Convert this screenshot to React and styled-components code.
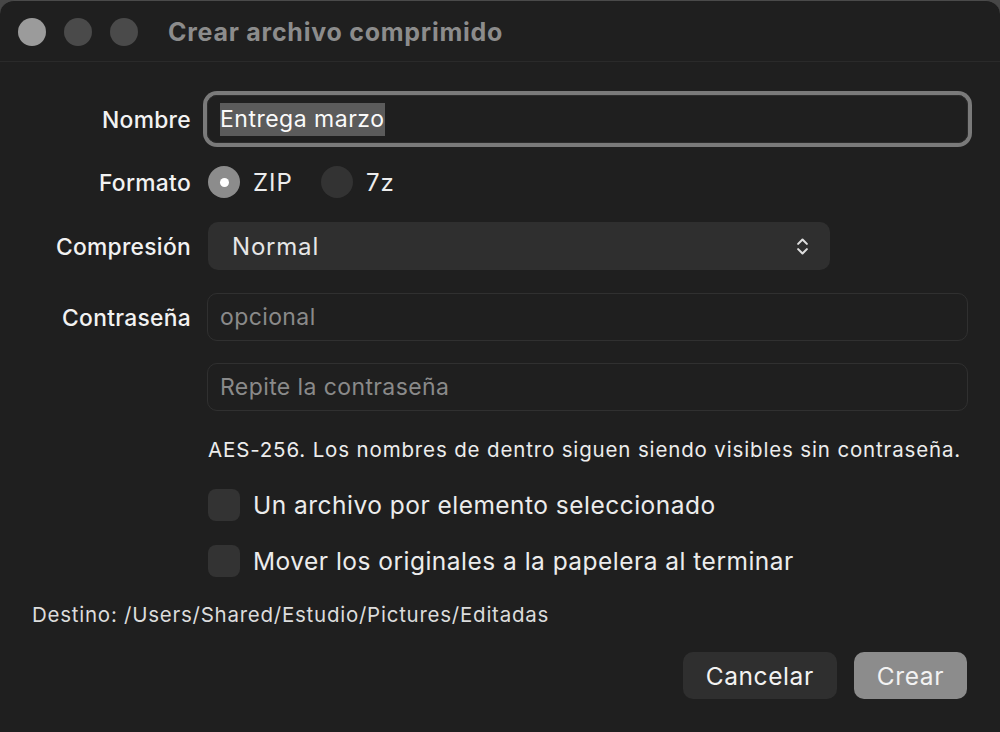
import React from "react";
import styled, { createGlobalStyle } from "styled-components";
import { ChevronsUpDown } from "lucide-react";

const GlobalStyle = createGlobalStyle`
    html, body {
        margin: 0;
        padding: 0;
        background: #474747;
    }
    body {
        font-family: "Inter", "Liberation Sans", sans-serif;
        -webkit-font-smoothing: antialiased;
    }
`;

const Window = styled.div`
    width: 1000px;
    height: 732px;
    box-sizing: border-box;
    background: #1f1f1f;
    border-top: 1px solid #4a4a4a;
    border-radius: 14px 14px 0 0;
    display: flex;
    flex-direction: column;
    overflow: hidden;
`;

const TitleBar = styled.div`
    height: 61px;
    display: flex;
    align-items: center;
    padding: 2px 0 0 18px;
    box-sizing: border-box;
    border-bottom: 1px solid #2a2a2a;
`;

const Light = styled.span`
    width: 28px;
    height: 28px;
    border-radius: 50%;
    background: ${(p) => (p.active ? "#9b9b9b" : "#4a4a4a")};
    margin-right: 18px;
`;

const Title = styled.h1`
    margin: 0 0 0 12px;
    font-size: 25px;
    font-weight: 700;
    color: #8c8c8c;
    letter-spacing: 0.75px;
`;

const Body = styled.div`
    display: flex;
    flex-direction: column;
    padding: 0 32px 0 0;
`;

const Row = styled.div`
    display: flex;
    align-items: center;
    margin-top: ${(p) => p.mt}px;
    height: ${(p) => p.h}px;
`;

const Label = styled.div`
    width: 191px;
    flex-shrink: 0;
    text-align: right;
    font-size: 22.8px;
    font-weight: 500;
    letter-spacing: 0.3px;
    color: #f2f2f2;
    margin-right: 16px;
`;

const Field = styled.div`
    flex: 1;
    height: 48px;
    box-sizing: border-box;
    display: flex;
    align-items: center;
    padding: 0 12px;
    border-radius: 10px;
    border: 1px solid ${(p) => (p.focused ? "#2c2c2c" : "#303030")};
    font-size: 23px;
    letter-spacing: ${(p) => (p.focused ? 0.5 : 0.4)}px;
    color: ${(p) => (p.placeholder ? "#8a8a8a" : "#f2f2f2")};
    box-shadow: ${(p) => (p.focused ? "0 0 0 4px #7a7a7a" : "none")};
`;

const Selection = styled.span`
    background: #5b5b5b;
    padding: 2px 0 3px;
    color: #fafafa;
`;

const RadioGroup = styled.div`
    display: flex;
    align-items: center;
    padding-left: 1px;
`;

const Radio = styled.span`
    width: 32px;
    height: 32px;
    border-radius: 50%;
    background: ${(p) => (p.checked ? "#8c8c8c" : "#333333")};
    display: flex;
    align-items: center;
    justify-content: center;
    margin-right: 13px;

    &::after {
        content: "";
        width: 9px;
        height: 9px;
        border-radius: 50%;
        background: #ffffff;
        display: ${(p) => (p.checked ? "block" : "none")};
    }
`;

const OptionText = styled.span`
    font-size: 24px;
    letter-spacing: 1px;
    color: #ececec;
    margin-right: ${(p) => p.mr || 0}px;
`;

const Select = styled.div`
    width: 622px;
    height: 48px;
    box-sizing: border-box;
    margin-left: 1px;
    background: #2f2f2f;
    border-radius: 10px;
    display: flex;
    align-items: center;
    justify-content: space-between;
    padding: 0 17px 0 24px;
    font-size: 24px;
    letter-spacing: 0.8px;
    color: #e6e6e6;
`;

const Note = styled.div`
    margin-left: 208px;
    font-size: 20.5px;
    letter-spacing: 0.85px;
    color: #ececec;
`;

const Check = styled.span`
    width: 32px;
    height: 32px;
    border-radius: 8px;
    background: #333333;
    margin: 0 13px 0 208px;
`;

const CheckText = styled.span`
    font-size: 24.5px;
    letter-spacing: 0.48px;
    color: #ececec;
`;

const Destination = styled.div`
    margin-left: 32px;
    font-size: 20.5px;
    letter-spacing: 0.75px;
    color: #dcdcdc;
`;

const Footer = styled.div`
    display: flex;
    justify-content: flex-end;
    gap: 17px;
    margin-top: 26px;
    padding-right: 1px;
`;

const Button = styled.button`
    height: 47px;
    border: none;
    border-radius: 10px;
    font-family: inherit;
    font-size: 24.5px;
    letter-spacing: 0.6px;
    color: #f2f2f2;
    background: ${(p) => (p.primary ? "#8c8c8c" : "#2f2f2f")};
    padding: 0 23px;
`;

const App = () => {
    return (
        <>
            <GlobalStyle />
            <Window>
                <TitleBar>
                    <Light active />
                    <Light />
                    <Light />
                    <Title>Crear archivo comprimido</Title>
                </TitleBar>
                <Body>
                    <Row mt={33} h={48}>
                        <Label>Nombre</Label>
                        <Field focused>
                            <Selection>Entrega marzo</Selection>
                        </Field>
                    </Row>
                    <Row mt={23} h={32}>
                        <Label>Formato</Label>
                        <RadioGroup>
                            <Radio checked />
                            <OptionText mr={28}>ZIP</OptionText>
                            <Radio />
                            <OptionText>7z</OptionText>
                        </RadioGroup>
                    </Row>
                    <Row mt={24} h={48}>
                        <Label>Compresión</Label>
                        <Select>
                            Normal
                            <ChevronsUpDown size={21} strokeWidth={2.4} color="#dedede" />
                        </Select>
                    </Row>
                    <Row mt={23} h={48}>
                        <Label>Contraseña</Label>
                        <Field placeholder="true">opcional</Field>
                    </Row>
                    <Row mt={22} h={48}>
                        <Label />
                        <Field placeholder="true">Repite la contraseña</Field>
                    </Row>
                    <Row mt={26} h={24}>
                        <Note>AES-256. Los nombres de dentro siguen siendo visibles sin contraseña.</Note>
                    </Row>
                    <Row mt={28} h={32}>
                        <Check />
                        <CheckText>Un archivo por elemento seleccionado</CheckText>
                    </Row>
                    <Row mt={24} h={32}>
                        <Check />
                        <CheckText>Mover los originales a la papelera al terminar</CheckText>
                    </Row>
                    <Row mt={25} h={24}>
                        <Destination>Destino: /Users/Shared/Estudio/Pictures/Editadas</Destination>
                    </Row>
                    <Footer>
                        <Button>Cancelar</Button>
                        <Button primary>Crear</Button>
                    </Footer>
                </Body>
            </Window>
        </>
    );
};

export default App;
